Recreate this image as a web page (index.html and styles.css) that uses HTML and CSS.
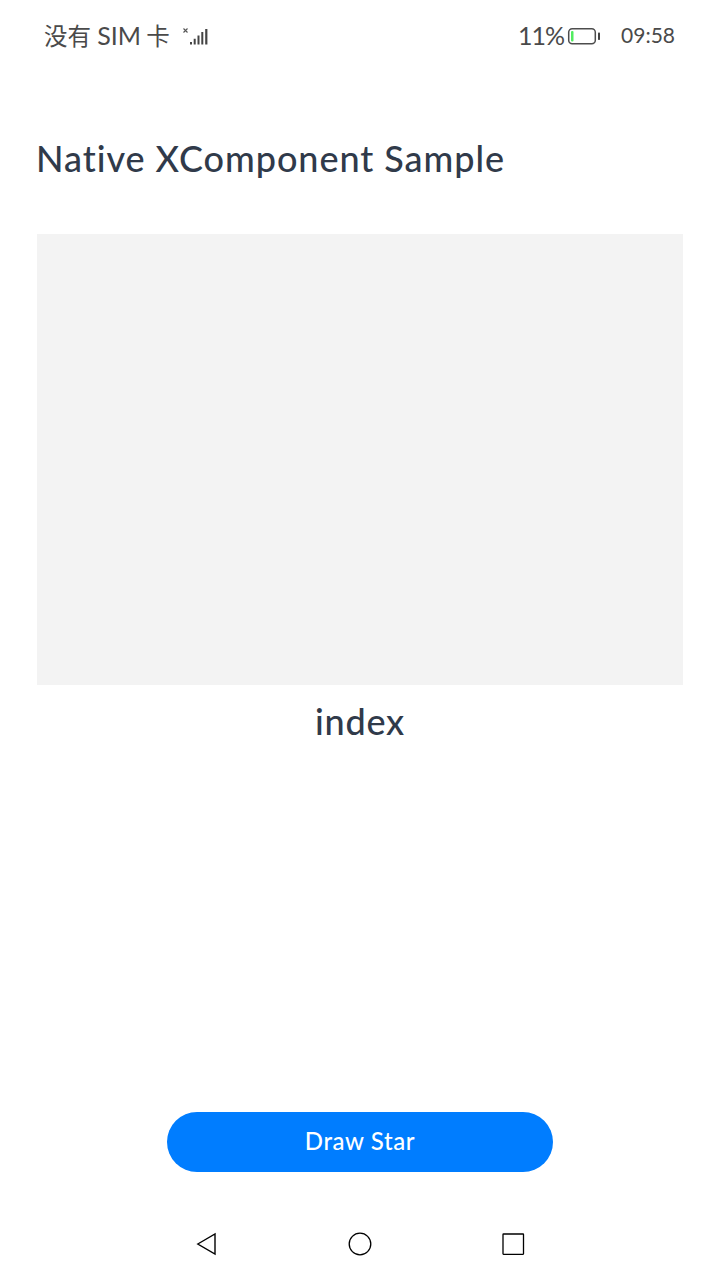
FILE: index.html
```html
<!DOCTYPE html>
<html lang="zh-CN">
<head>
<meta charset="utf-8">
<title>Native XComponent Sample</title>
<link rel="stylesheet" href="styles.css">
</head>
<body>
<div class="screen">
  <header class="status">
    <span class="carrier">没有 <span class="sim">SIM</span> 卡</span>
    <svg class="signal" width="28" height="20" viewBox="0 0 28 20">
      <path d="M1.500 2.500l4 4M5.500 2.500l-4 4" stroke="#555" stroke-width="1.100"/>
      <path d="M8 16h2v2.500h-2zM11.700 12.800h2v5.700h-2zM15.500 9.500h2v9h-2zM19.300 6h2v12.500h-2zM23.200 3h2.200v15.500h-2.200z" fill="#444"/>
    </svg>
    <span class="percent">11%</span>
    <svg class="battery" width="34" height="20" viewBox="0 0 34 20">
      <rect x="1.700" y="2.700" width="26.600" height="15" rx="3.500" fill="none" stroke="#4d4d4d" stroke-width="1.500"/>
      <rect x="4" y="5" width="2.500" height="10.500" rx="1" fill="#52ec60"/>
      <rect x="31" y="6.500" width="2" height="7.500" rx=".7" fill="#444"/>
    </svg>
    <time class="clock">09:58</time>
  </header>
  <main class="content">
    <h1 class="title">Native XComponent Sample</h1>
    <div class="surface"></div>
    <p class="caption">index</p>
    <button class="draw">Draw Star</button>
  </main>
  <nav class="navbar">
    <svg width="40" height="40" viewBox="0 0 40 40"><path d="M7.800 19L25 9v20z" fill="none" stroke="#000" stroke-width="1.400"/></svg>
    <svg width="40" height="40" viewBox="0 0 40 40"><circle cx="20" cy="19" r="10.800" fill="none" stroke="#000" stroke-width="1.300"/></svg>
    <svg width="40" height="40" viewBox="0 0 40 40"><rect x="9" y="9" width="20.500" height="20.300" rx=".5" fill="none" stroke="#000" stroke-width="1.300"/></svg>
  </nav>
</div>
</body>
</html>
```
FILE: styles.css
```css
* { box-sizing: border-box; }
body { margin: 0; background: #fff; font-family: Lato, "Noto Sans CJK SC", sans-serif; }
.screen { width: 720px; height: 1280px; display: flex; flex-direction: column; background: #fff; overflow: hidden; }
.status { height: 72px; padding: 0 45px 0 44px; display: flex; align-items: center; color: #4a4a4a; white-space: nowrap; }
.carrier { width: 138px; padding-bottom: 3px; font: 400 23.5px/36px "Noto Sans CJK SC", sans-serif; }
.sim { margin-left: 1px; font-family: Lato, sans-serif; font-size: 25px; }
.percent { margin-left: auto; padding-bottom: 2px; font-size: 25px; line-height: 36px; letter-spacing: -1px; }
.battery { margin-left: 3px; }
.clock { margin-left: 20px; padding-bottom: 2px; font-size: 21px; line-height: 36px; }
.content { flex: 1; padding: 0 37px; display: flex; flex-direction: column; }
.title { margin: 62px 0 52px -1px; height: 48px; font-size: 36px; line-height: 48px; font-weight: 500; color: #303a4a; white-space: nowrap; letter-spacing: 0.95px; }
.surface { height: 451px; flex: none; background: #f3f3f3; }
.caption { margin: 12px 0 0; height: 48px; font-size: 36px; line-height: 48px; font-weight: 500; color: #303a4a; text-align: center; letter-spacing: 0.8px; }
.draw { margin: 367px auto 0; width: 386px; height: 60px; border: 0; border-radius: 30px; background: #007dff; color: #fff; font: 500 24px/32px Lato, sans-serif; letter-spacing: 0.6px; padding: 0 0 2px; }
.navbar { height: 72px; padding: 17px 186px 15px 190px; display: flex; gap: 110px; }
.navbar svg { flex: none; }
.navbar svg:last-child { margin-left: 4px; }
```
